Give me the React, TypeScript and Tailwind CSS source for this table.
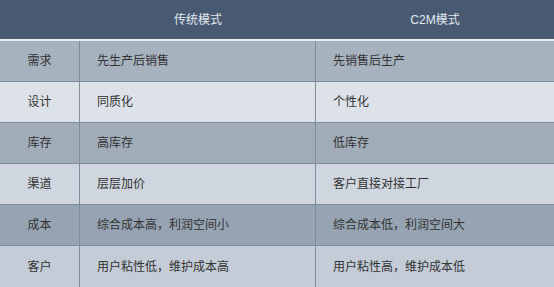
import React from 'react';

const rows = [
  { label: '需求', a: '先生产后销售', b: '先销售后生产', bg: 'bg-[#a7b2bf]' },
  { label: '设计', a: '同质化', b: '个性化', bg: 'bg-[#dde2e9]' },
  { label: '库存', a: '高库存', b: '低库存', bg: 'bg-[#a1acb9]' },
  { label: '渠道', a: '层层加价', b: '客户直接对接工厂', bg: 'bg-[#cfd6df]' },
  { label: '成本', a: '综合成本高，利润空间小', b: '综合成本低，利润空间大', bg: 'bg-[#96a3b2]' },
  { label: '客户', a: '用户粘性低，维护成本高', b: '用户粘性高，维护成本低', bg: 'bg-[#c3ccd7]' },
];

export default function App() {
  return (
    <div
      className="h-[287px] w-[554px] overflow-hidden bg-white text-[12px] text-[#333]"
      style={{ fontFamily: '"Liberation Sans", "Noto Sans CJK SC", sans-serif' }}
    >
      <div className="grid h-[39px] grid-cols-[80px_236px_1fr] items-center bg-[#475a72] text-[#e3e8ee]">
        <div />
        <div className="text-center">传统模式</div>
        <div className="text-center">C2M模式</div>
      </div>
      <div className="h-[2px] bg-[#e8ecf1]" />
      {rows.map((r, i) => (
        <div
          key={r.label}
          className={`grid h-[41px] grid-cols-[80px_236px_1fr] ${r.bg} ${i < rows.length - 1 ? 'border-b border-[#7e8c9d]' : ''}`}
        >
          <div className="flex items-center justify-center border-r border-[#7e8c9d]">{r.label}</div>
          <div className="flex items-center border-r border-[#7e8c9d] pl-[17px]">{r.a}</div>
          <div className="flex items-center pl-[17px]">{r.b}</div>
        </div>
      ))}
    </div>
  );
}
